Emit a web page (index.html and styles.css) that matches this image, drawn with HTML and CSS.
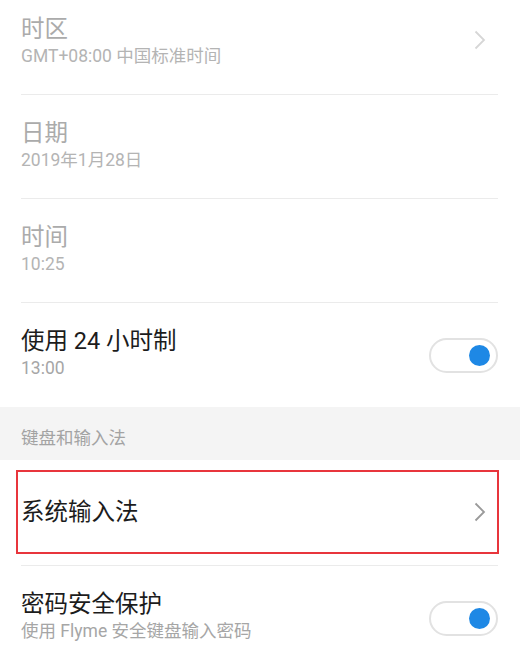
FILE: index.html
```html
<!DOCTYPE html>
<html lang="zh-CN">
<head>
<meta charset="utf-8">
<link rel="stylesheet" href="styles.css">
</head>
<body>
<div class="page">
  <div class="group">
    <div class="row disabled">
      <div class="text">
        <div class="title">时区</div>
        <div class="sub">GMT+08:00 中国标准时间</div>
      </div>
      <svg class="chev chev-light" viewBox="0 0 12 20" width="12" height="20"><path d="M1.5 1.5 L10 10 L1.5 18.5" fill="none" stroke="currentColor" stroke-width="1.8"/></svg>
    </div>
    <div class="row disabled">
      <div class="text">
        <div class="title">日期</div>
        <div class="sub">2019年1月28日</div>
      </div>
    </div>
    <div class="row disabled">
      <div class="text">
        <div class="title">时间</div>
        <div class="sub">10:25</div>
      </div>
    </div>
    <div class="row last">
      <div class="text">
        <div class="title">使用 24 小时制</div>
        <div class="sub">13:00</div>
      </div>
      <div class="toggle"><span class="knob"></span></div>
    </div>
  </div>
  <div class="section-header">键盘和输入法</div>
  <div class="group">
    <div class="row row-hl">
      <div class="hl-box">
        <div class="title">系统输入法</div>
        <svg class="chev chev-dark" viewBox="0 0 12 20" width="12" height="20"><path d="M1.5 1.5 L10 10 L1.5 18.5" fill="none" stroke="currentColor" stroke-width="1.8"/></svg>
      </div>
    </div>
    <div class="row last">
      <div class="text">
        <div class="title">密码安全保护</div>
        <div class="sub">使用 Flyme 安全键盘输入密码</div>
      </div>
      <div class="toggle"><span class="knob"></span></div>
    </div>
  </div>
</div>
</body>
</html>
```

FILE: styles.css
```css
html, body {
  margin: 0;
  padding: 0;
  background: #ffffff;
}
body {
  width: 520px;
  height: 654px;
  overflow: hidden;
  font-family: Roboto, "Noto Sans CJK SC", sans-serif;
}
.page {
  margin-top: -9px;
}
.group {
  padding: 0 22px 0 21px;
}
.row {
  display: flex;
  align-items: center;
  justify-content: space-between;
  height: 104px;
  border-bottom: 1px solid #ebebeb;
  box-sizing: border-box;
}
.row.last {
  border-bottom: none;
}
.text {
  display: flex;
  flex-direction: column;
  margin-bottom: 2px;
}
.title {
  font-size: 23.5px;
  line-height: 28px;
  color: #1c1c1c;
}
.sub {
  font-size: 17.5px;
  line-height: 26px;
  color: #a6a6a6;
}
.disabled .title {
  color: #ababab;
}
.disabled .sub {
  color: #b4b4b4;
}
.chev {
  display: block;
  margin-right: 12px;
}
.chev-light {
  color: #d6d6d6;
  margin-bottom: 6px;
}
.chev-dark {
  color: #9a9a9a;
}
.toggle {
  width: 69px;
  height: 35px;
  box-sizing: border-box;
  border: 2px solid #e2e2e2;
  border-radius: 18px;
  display: flex;
  align-items: center;
  justify-content: flex-end;
  padding-right: 6px;
}
.knob {
  width: 21px;
  height: 21px;
  border-radius: 50%;
  background: #1e88e5;
}
.section-header {
  background: #f4f4f4;
  height: 53px;
  box-sizing: border-box;
  padding: 19px 21px 0;
  font-size: 17.5px;
  line-height: 24px;
  color: #a3a3a3;
}
.row-hl {
  height: 106px;
  align-items: stretch;
}
.hl-box {
  flex: 1;
  margin: 10px -1px 11px -5px;
  border: 2px solid #e8353c;
  display: flex;
  align-items: center;
  justify-content: space-between;
  padding-left: 3px;
}
.hl-box .chev {
  margin-right: 11px;
}
```
